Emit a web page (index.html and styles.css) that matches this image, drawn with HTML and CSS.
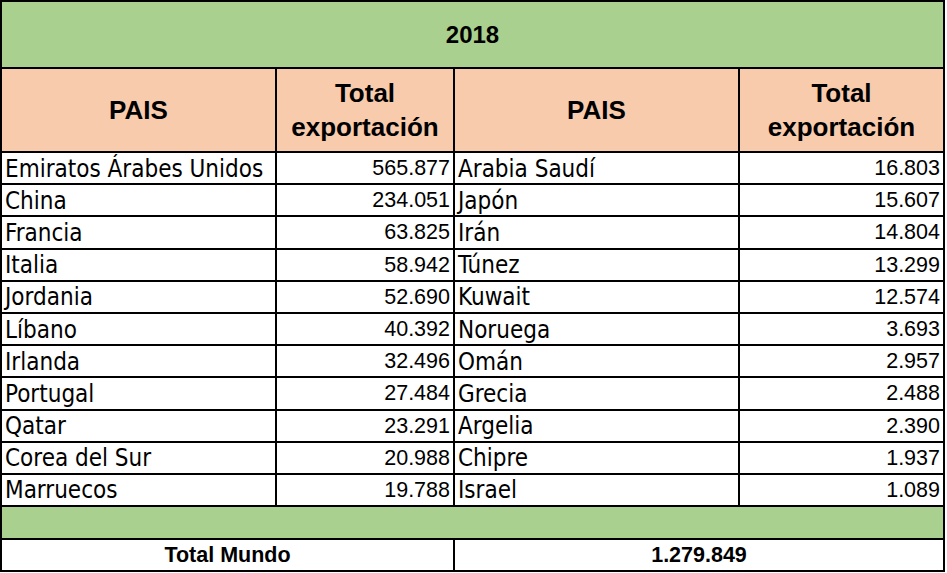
FILE: index.html
```html
<!DOCTYPE html>
<html lang="es">
<head>
<meta charset="utf-8">
<title>Exportaciones 2018</title>
<link rel="stylesheet" href="styles.css">
</head>
<body>
<div class="sheet">
  <div class="cell year span4">2018</div>
  <div class="cell head">PAIS</div>
  <div class="cell head">Total<br>exportación</div>
  <div class="cell head">PAIS</div>
  <div class="cell head">Total<br>exportación</div>

  <div class="cell name">Emiratos Árabes Unidos</div><div class="cell num">565.877</div><div class="cell name">Arabia Saudí</div><div class="cell num">16.803</div>
  <div class="cell name">China</div><div class="cell num">234.051</div><div class="cell name">Japón</div><div class="cell num">15.607</div>
  <div class="cell name">Francia</div><div class="cell num">63.825</div><div class="cell name">Irán</div><div class="cell num">14.804</div>
  <div class="cell name">Italia</div><div class="cell num">58.942</div><div class="cell name">Túnez</div><div class="cell num">13.299</div>
  <div class="cell name">Jordania</div><div class="cell num">52.690</div><div class="cell name">Kuwait</div><div class="cell num">12.574</div>
  <div class="cell name">Líbano</div><div class="cell num">40.392</div><div class="cell name">Noruega</div><div class="cell num">3.693</div>
  <div class="cell name">Irlanda</div><div class="cell num">32.496</div><div class="cell name">Omán</div><div class="cell num">2.957</div>
  <div class="cell name">Portugal</div><div class="cell num">27.484</div><div class="cell name">Grecia</div><div class="cell num">2.488</div>
  <div class="cell name">Qatar</div><div class="cell num">23.291</div><div class="cell name">Argelia</div><div class="cell num">2.390</div>
  <div class="cell name">Corea del Sur</div><div class="cell num">20.988</div><div class="cell name">Chipre</div><div class="cell num">1.937</div>
  <div class="cell name">Marruecos</div><div class="cell num">19.788</div><div class="cell name">Israel</div><div class="cell num">1.089</div>

  <div class="cell spacer span4"></div>
  <div class="cell total span2">Total Mundo</div>
  <div class="cell total span2">1.279.849</div>
</div>
</body>
</html>
```

FILE: styles.css
```css
html, body {
  margin: 0;
  padding: 0;
  background: #ffffff;
}

.sheet {
  display: grid;
  box-sizing: border-box;
  width: 945px;
  padding: 2px;
  gap: 2px;
  background: #000000;
  grid-template-columns: 273px 176px 283px 203px;
  grid-template-rows: 65px 82px repeat(11, 30.2px) 31px 30px;
  color: #000000;
}

.cell {
  display: flex;
  align-items: center;
  background: #ffffff;
  overflow: hidden;
  white-space: nowrap;
}

.span4 { grid-column: span 4; }
.span2 { grid-column: span 2; }

.year {
  background: #a9d08e;
  justify-content: center;
  font-family: "Liberation Sans", Arial, sans-serif;
  font-weight: bold;
  font-size: 24px;
}

.head {
  background: #f8cbad;
  justify-content: center;
  text-align: center;
  font-family: "Liberation Sans", Arial, sans-serif;
  font-weight: bold;
  font-size: 26px;
  line-height: 34px;
}

.name {
  padding-left: 3px;
  padding-top: 1px;
  font-family: "DejaVu Sans Condensed", "DejaVu Sans", sans-serif;
  font-stretch: condensed;
  font-size: 24px;
}

.num {
  justify-content: flex-end;
  padding-right: 3px;
  padding-top: 1px;
  font-family: "Liberation Sans", Arial, sans-serif;
  font-size: 21.5px;
}

.spacer {
  background: #a9d08e;
}

.total {
  justify-content: center;
  padding-top: 1px;
  font-family: "Liberation Sans", Arial, sans-serif;
  font-weight: bold;
  font-size: 21.5px;
}
```
